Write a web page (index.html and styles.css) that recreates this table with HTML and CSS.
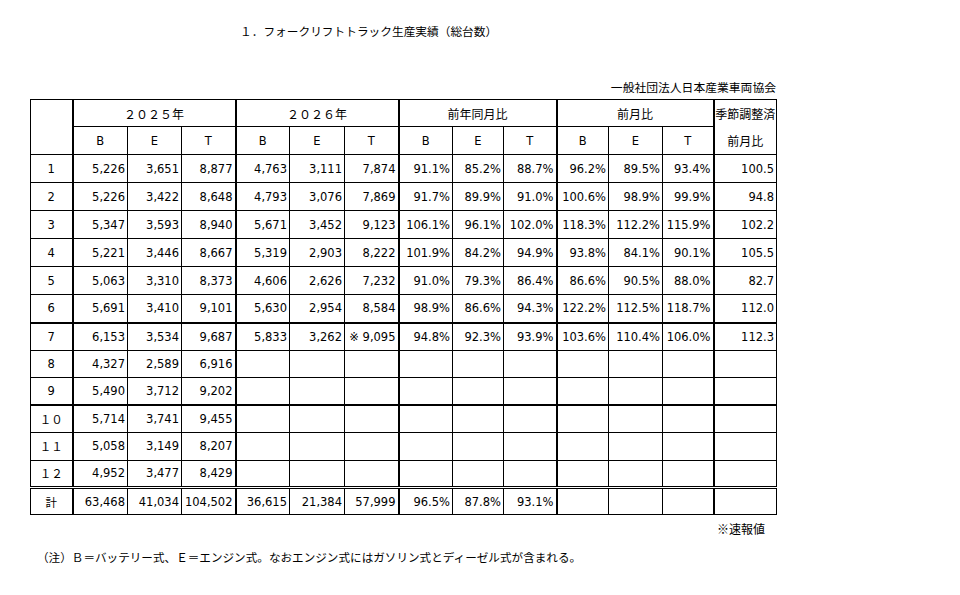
FILE: index.html
```html
<!DOCTYPE html>
<html lang="ja">
<head>
<meta charset="utf-8">
<title>フォークリフトトラック生産実績</title>
<link rel="stylesheet" href="styles.css">
</head>
<body>
<div class="page">
  <h1 class="title">１．フォークリフトトラック生産実績（総台数）</h1>
  <div class="source">一般社団法人日本産業車両協会</div>
  <table class="data">
    <colgroup>
      <col class="c-lbl">
      <col class="c55"><col class="c54"><col class="c54">
      <col class="c54"><col class="c55"><col class="c54">
      <col class="c54"><col class="c51"><col class="c53">
      <col class="c52"><col class="c54"><col class="c51">
      <col class="c-adj">
    </colgroup>
    <thead>
      <tr class="h1">
        <th class="lbl" rowspan="2"></th>
        <th class="grp" colspan="3">２０２５年</th>
        <th class="grp" colspan="3">２０２６年</th>
        <th class="grp" colspan="3">前年同月比</th>
        <th class="grp" colspan="3">前月比</th>
        <th class="grp adj-top">季節調整済</th>
      </tr>
      <tr class="h2">
        <th class="gs">B</th><th>E</th><th>T</th>
        <th class="gs">B</th><th>E</th><th>T</th>
        <th class="gs">B</th><th>E</th><th>T</th>
        <th class="gs">B</th><th>E</th><th>T</th>
        <th class="gs adj-bot">前月比</th>
      </tr>
    </thead>
    <tbody>
      <tr><td class="lbl">1</td><td class="gs">5,226</td><td>3,651</td><td>8,877</td><td class="gs">4,763</td><td>3,111</td><td>7,874</td><td class="gs">91.1%</td><td>85.2%</td><td>88.7%</td><td class="gs">96.2%</td><td>89.5%</td><td>93.4%</td><td class="gs">100.5</td></tr>
      <tr><td class="lbl">2</td><td class="gs">5,226</td><td>3,422</td><td>8,648</td><td class="gs">4,793</td><td>3,076</td><td>7,869</td><td class="gs">91.7%</td><td>89.9%</td><td>91.0%</td><td class="gs">100.6%</td><td>98.9%</td><td>99.9%</td><td class="gs">94.8</td></tr>
      <tr><td class="lbl">3</td><td class="gs">5,347</td><td>3,593</td><td>8,940</td><td class="gs">5,671</td><td>3,452</td><td>9,123</td><td class="gs">106.1%</td><td>96.1%</td><td>102.0%</td><td class="gs">118.3%</td><td>112.2%</td><td>115.9%</td><td class="gs">102.2</td></tr>
      <tr><td class="lbl">4</td><td class="gs">5,221</td><td>3,446</td><td>8,667</td><td class="gs">5,319</td><td>2,903</td><td>8,222</td><td class="gs">101.9%</td><td>84.2%</td><td>94.9%</td><td class="gs">93.8%</td><td>84.1%</td><td>90.1%</td><td class="gs">105.5</td></tr>
      <tr><td class="lbl">5</td><td class="gs">5,063</td><td>3,310</td><td>8,373</td><td class="gs">4,606</td><td>2,626</td><td>7,232</td><td class="gs">91.0%</td><td>79.3%</td><td>86.4%</td><td class="gs">86.6%</td><td>90.5%</td><td>88.0%</td><td class="gs">82.7</td></tr>
      <tr class="q-end"><td class="lbl">6</td><td class="gs">5,691</td><td>3,410</td><td>9,101</td><td class="gs">5,630</td><td>2,954</td><td>8,584</td><td class="gs">98.9%</td><td>86.6%</td><td>94.3%</td><td class="gs">122.2%</td><td>112.5%</td><td>118.7%</td><td class="gs">112.0</td></tr>
      <tr class="r2"><td class="lbl">7</td><td class="gs">6,153</td><td>3,534</td><td>9,687</td><td class="gs">5,833</td><td>3,262</td><td>※ 9,095</td><td class="gs">94.8%</td><td>92.3%</td><td>93.9%</td><td class="gs">103.6%</td><td>110.4%</td><td>106.0%</td><td class="gs">112.3</td></tr>
      <tr class="r2"><td class="lbl">8</td><td class="gs">4,327</td><td>2,589</td><td>6,916</td><td class="gs"></td><td></td><td></td><td class="gs"></td><td></td><td></td><td class="gs"></td><td></td><td></td><td class="gs"></td></tr>
      <tr class="r2 q-end"><td class="lbl">9</td><td class="gs">5,490</td><td>3,712</td><td>9,202</td><td class="gs"></td><td></td><td></td><td class="gs"></td><td></td><td></td><td class="gs"></td><td></td><td></td><td class="gs"></td></tr>
      <tr class="r2"><td class="lbl">１０</td><td class="gs">5,714</td><td>3,741</td><td>9,455</td><td class="gs"></td><td></td><td></td><td class="gs"></td><td></td><td></td><td class="gs"></td><td></td><td></td><td class="gs"></td></tr>
      <tr class="r2"><td class="lbl">１１</td><td class="gs">5,058</td><td>3,149</td><td>8,207</td><td class="gs"></td><td></td><td></td><td class="gs"></td><td></td><td></td><td class="gs"></td><td></td><td></td><td class="gs"></td></tr>
      <tr class="r2"><td class="lbl">１２</td><td class="gs">4,952</td><td>3,477</td><td>8,429</td><td class="gs"></td><td></td><td></td><td class="gs"></td><td></td><td></td><td class="gs"></td><td></td><td></td><td class="gs"></td></tr>
      <tr class="total"><td class="lbl">計</td><td class="gs">63,468</td><td>41,034</td><td>104,502</td><td class="gs">36,615</td><td>21,384</td><td>57,999</td><td class="gs">96.5%</td><td>87.8%</td><td>93.1%</td><td class="gs"></td><td></td><td></td><td class="gs"></td></tr>
    </tbody>
  </table>
  <div class="flash">※速報値</div>
  <p class="note">（注）Ｂ＝バッテリー式、Ｅ＝エンジン式。なおエンジン式にはガソリン式とディーゼル式が含まれる。</p>
</div>
</body>
</html>
```
FILE: styles.css
```css
html, body {
  margin: 0;
  padding: 0;
  background: #fff;
}
body {
  font-family: "DejaVu Sans", "Noto Sans CJK JP", sans-serif;
  font-size: 11.5px;
  color: #000;
}
.page {
  width: 746px;
  margin-left: 30px;
  padding-top: 23px;
}
.title {
  margin: 0 0 0 210px;
  font-family: "Noto Sans CJK JP", sans-serif;
  font-size: 11.7px;
  font-weight: normal;
  line-height: 16px;
}
.source {
  margin-top: 41px;
  text-align: right;
  font-family: "Noto Sans CJK JP", sans-serif;
  font-size: 11.8px;
  line-height: 14px;
}
.data {
  margin-top: 5px;
  border-collapse: collapse;
  table-layout: fixed;
  width: 746px;
}
.c-lbl { width: 42px; }
.c55 { width: 55px; }
.c54 { width: 54px; }
.c53 { width: 53px; }
.c52 { width: 52px; }
.c51 { width: 51px; }
.c-adj { width: 63px; }
.data th, .data td {
  border: 1px solid #000;
  padding: 0 2px 0 0;
  white-space: nowrap;
  overflow: hidden;
}
.data th {
  font-weight: normal;
  text-align: center;
  padding: 0;
  font-family: "Noto Sans CJK JP", "DejaVu Sans", sans-serif;
  font-size: 12px;
}
.data .h2 th {
  font-family: "DejaVu Sans", "Noto Sans CJK JP", sans-serif;
  font-size: 11.5px;
}
.data .h2 th.adj-bot {
  font-family: "Noto Sans CJK JP", sans-serif;
  font-size: 12px;
}
.data td {
  text-align: right;
}
.data td.lbl {
  text-align: center;
  padding: 0;
}
.data .lbl {
  border-right: 2px solid #000;
}
.data .grp, .data .gs {
  border-left: 2px solid #000;
}
.data .adj-top {
  border-bottom: none;
  vertical-align: middle;
}
.data .adj-bot {
  border-top: none;
}
.h1 { height: 27px; }
.h2 { height: 28px; }
tbody tr { height: 28px; }
tbody tr.r2 { height: 27.5px; }
tbody tr.q-end td {
  border-bottom: 2px solid #000;
}
tbody tr.total { height: 27px; }
tbody tr.total td {
  border-top: 3px double #000;
}
.flash {
  margin-top: 7px;
  padding-right: 11px;
  text-align: right;
  font-family: "Noto Sans CJK JP", sans-serif;
  font-size: 12px;
  line-height: 14px;
}
.note {
  margin: 14px 0 0 7px;
  font-family: "Noto Sans CJK JP", sans-serif;
  font-size: 11.6px;
  line-height: 14px;
}
```
